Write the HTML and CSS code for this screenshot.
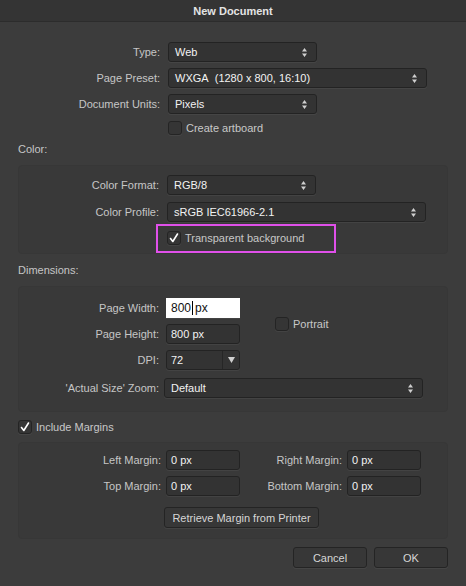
FILE: index.html
```html
<!DOCTYPE html>
<html>
<head>
<meta charset="utf-8">
<link rel="stylesheet" href="styles.css">
</head>
<body>
<div class="window">
  <div class="titlebar">New Document</div>
  <div class="content">
    <div class="form top-form">
      <div class="row"><span class="lbl w142">Type:</span><div class="select short"><span>Web</span><svg class="step" width="5" height="9" viewBox="0 0 5 9"><path d="M0 3.5 L2.5 0 L5 3.5Z M0 5.5 L2.5 9 L5 5.5Z" fill="#cfcfcf"/></svg></div></div>
      <div class="row"><span class="lbl w142">Page Preset:</span><div class="select long"><span>WXGA&nbsp; (1280 x 800, 16:10)</span><svg class="step" width="5" height="9" viewBox="0 0 5 9"><path d="M0 3.5 L2.5 0 L5 3.5Z M0 5.5 L2.5 9 L5 5.5Z" fill="#cfcfcf"/></svg></div></div>
      <div class="row"><span class="lbl w142">Document Units:</span><div class="select short"><span>Pixels</span><svg class="step" width="5" height="9" viewBox="0 0 5 9"><path d="M0 3.5 L2.5 0 L5 3.5Z M0 5.5 L2.5 9 L5 5.5Z" fill="#cfcfcf"/></svg></div></div>
      <div class="row check-row"><span class="w142"></span><span class="check"><span class="box"></span><span class="ctext">Create artboard</span></span></div>
    </div>

    <div class="section-label">Color:</div>
    <div class="panel color-panel">
      <div class="row"><span class="lbl w140">Color Format:</span><div class="select short"><span>RGB/8</span><svg class="step" width="5" height="9" viewBox="0 0 5 9"><path d="M0 3.5 L2.5 0 L5 3.5Z M0 5.5 L2.5 9 L5 5.5Z" fill="#cfcfcf"/></svg></div></div>
      <div class="row"><span class="lbl w140">Color Profile:</span><div class="select long"><span>sRGB IEC61966-2.1</span><svg class="step" width="5" height="9" viewBox="0 0 5 9"><path d="M0 3.5 L2.5 0 L5 3.5Z M0 5.5 L2.5 9 L5 5.5Z" fill="#cfcfcf"/></svg></div></div>
      <div class="highlight"><span class="check"><span class="box"><svg width="12" height="12" viewBox="0 0 12 12"><path d="M2.5 6.5 L4.8 9.5 L9.5 2" fill="none" stroke="#fff" stroke-width="1.6" stroke-linecap="round" stroke-linejoin="round"/></svg></span><span class="ctext">Transparent background</span></span></div>
    </div>

    <div class="section-label dims-label">Dimensions:</div>
    <div class="panel dim-panel">
      <div class="dim-grid">
        <span class="lbl">Page Width:</span>
        <div class="field active"><span class="caret">800</span>px</div>
        <span class="check portrait"><span class="box"></span><span class="ctext">Portrait</span></span>
        <span class="lbl">Page Height:</span>
        <div class="field">800 px</div>
        <span class="lbl">DPI:</span>
        <div class="field combo"><span class="cval">72</span><span class="cbtn"><svg width="7" height="6" viewBox="0 0 7 6"><path d="M0 0 L7 0 L3.5 6Z" fill="#d0d0d0"/></svg></span></div>
      </div>
      <div class="row zoom-row"><span class="lbl w140">'Actual Size' Zoom:</span><div class="select long"><span>Default</span><svg class="step" width="5" height="9" viewBox="0 0 5 9"><path d="M0 3.5 L2.5 0 L5 3.5Z M0 5.5 L2.5 9 L5 5.5Z" fill="#cfcfcf"/></svg></div></div>
    </div>

    <div class="include"><span class="check"><span class="box"><svg width="12" height="12" viewBox="0 0 12 12"><path d="M2.5 6.5 L4.8 9.5 L9.5 2" fill="none" stroke="#fff" stroke-width="1.6" stroke-linecap="round" stroke-linejoin="round"/></svg></span><span class="ctext">Include Margins</span></span></div>
    <div class="panel margin-panel">
      <div class="margin-grid">
        <span class="lbl">Left Margin:</span>
        <div class="field">0 px</div>
        <span class="lbl">Right Margin:</span>
        <div class="field">0 px</div>
        <span class="lbl">Top Margin:</span>
        <div class="field">0 px</div>
        <span class="lbl">Bottom Margin:</span>
        <div class="field">0 px</div>
      </div>
      <div class="retrieve-row"><button class="btn retrieve">Retrieve Margin from Printer</button></div>
    </div>

    <div class="actions">
      <button class="btn action">Cancel</button>
      <button class="btn action">OK</button>
    </div>
  </div>
</div>
</body>
</html>
```

FILE: styles.css
```css
* { box-sizing: border-box; }
html, body { margin: 0; padding: 0; }
body {
  width: 466px;
  height: 586px;
  background: #3c3c3c;
  font-family: "Liberation Sans", Arial, sans-serif;
  font-size: 11px;
  color: #c9c9c9;
  overflow: hidden;
}
.window { width: 466px; height: 586px; }
.titlebar {
  height: 22px;
  background: #343434;
  border-bottom: 1px solid #2c2c2c;
  color: #e4e4e4;
  font-weight: bold;
  font-size: 11px;
  text-align: center;
  line-height: 22px;
}
.content { padding: 0 18px; }
.form { display: flex; flex-direction: column; gap: 6px; }
.top-form { margin-top: 20px; }
.row { display: flex; align-items: center; height: 20px; }
.lbl { text-align: right; white-space: nowrap; color: #c6c6c6; }
.w142 { width: 142px; flex: none; margin-right: 8px; }
.w140 { width: 140px; flex: none; margin-right: 8px; }
.check-row { height: 15px; }

.select {
  height: 20px;
  display: flex;
  align-items: center;
  justify-content: space-between;
  padding: 0 9px 0 6px;
  background: #333333;
  border: 1px solid #232323;
  border-radius: 3px;
  box-shadow: 0 1px 0 rgba(255,255,255,0.05);
  color: #f2f2f2;
  white-space: nowrap;
}
.select.short { width: 149px; }
.select.long { width: 259px; }
.step { flex: none; }

.check { display: inline-flex; align-items: center; }
.box {
  width: 14px; height: 14px;
  background: #353535;
  border: 1px solid #242424;
  border-radius: 3px;
  display: inline-flex; align-items: center; justify-content: center;
  box-shadow: 0 1px 0 rgba(255,255,255,0.05);
  flex: none;
}
.ctext { margin-left: 4px; color: #c8c8c8; }

.section-label { margin-top: 8px; line-height: 13px; color: #c6c6c6; }
.dims-label { margin-top: 10px; }
.panel {
  width: 430px;
  background: #393939;
  border: 1px solid #373737;
  border-radius: 4px;
  margin-top: 9px;
}
.color-panel { padding-top: 9px; height: 89px; display: flex; flex-direction: column; }
.color-panel .row + .row { margin-top: 7px; }
.highlight {
  margin-top: 2px;
  margin-left: 137px;
  width: 180px;
  height: 30px;
  border: 2px solid #e050ea;
  padding: 5px 0 0 9px;
}

.dim-panel { padding: 11px 0 13px 0; }
.dim-grid {
  display: grid;
  grid-template-columns: 140px 74px auto;
  grid-auto-rows: 20px;
  column-gap: 7px;
  row-gap: 6px;
  align-items: center;
}
.dim-grid .lbl { grid-column: 1; }
.portrait { grid-column: 3; grid-row: 1 / span 2; margin-left: 28px; margin-top: 5px; }
.zoom-row { margin-top: 8px; }
.zoom-row .w140 { margin-right: 5px; }

.field {
  height: 20px;
  background: #333333;
  border: 1px solid #232323;
  border-radius: 3px;
  box-shadow: 0 1px 0 rgba(255,255,255,0.05);
  color: #f2f2f2;
  padding: 0 4px;
  display: flex;
  align-items: center;
  white-space: nowrap;
}
.field.active {
  background: #ffffff;
  border-color: #ffffff;
  border-radius: 0;
  color: #111;
  font-size: 12px;
}
.caret { border-right: 1px solid #000; padding-right: 1px; margin-right: 2px; }
.combo { padding: 0; }
.cval { flex: 1; padding-left: 4px; }
.cbtn {
  width: 17px; height: 100%;
  border-left: 1px solid #262626;
  display: flex; align-items: center; justify-content: center;
}

.include { margin-top: 8px; height: 14px; display: flex; }
.margin-panel { padding: 7px 0 10px 0; margin-top: 8px; }
.margin-grid {
  display: grid;
  grid-template-columns: 147px 74px 107px 74px;
  grid-auto-rows: 20px;
  row-gap: 6px;
  align-items: center;
}
.margin-grid .lbl { padding-right: 5px; }
.margin-grid .field { padding-left: 4px; }
.retrieve-row { margin-top: 11px; padding-left: 145px; }

.btn {
  font-family: "Liberation Sans", Arial, sans-serif;
  font-size: 11px;
  color: #d6d6d6;
  background: #373737;
  border: 1px solid #242424;
  border-radius: 3px;
  box-shadow: 0 1px 0 rgba(255,255,255,0.05);
  height: 21px;
  padding: 0;
  display: block;
}
.retrieve { width: 155px; }
.actions { display: flex; justify-content: flex-end; gap: 7px; margin-top: 8px; }
.action { width: 74px; }
```
